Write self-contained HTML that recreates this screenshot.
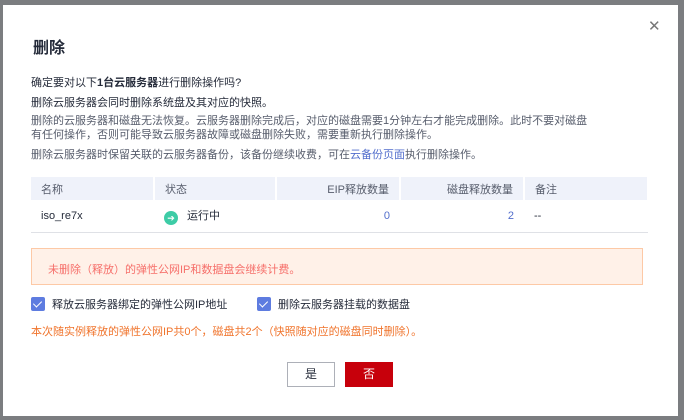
<!DOCTYPE html>
<html><head><meta charset="utf-8"><style>
*{margin:0;padding:0;box-sizing:border-box}
body{width:684px;height:420px;background:#7b7d80;font-family:"Liberation Sans","Noto Sans CJK SC",sans-serif;font-size:11px;color:#252b3a;position:relative;overflow:hidden}
.dlg{position:absolute;left:3px;top:5px;width:675px;height:411px;background:#fff}
.a{position:absolute;white-space:nowrap}
.t{left:30px;top:29px;font-size:16px;color:#252b3a;font-weight:600}
.x{left:645px;top:12px;font-size:15px;color:#777}
.l{left:28px;font-size:11px}
.g{color:#575d6c}
table{position:absolute;left:28px;top:172px;width:618px;border-collapse:collapse;font-size:11px}
th{background:#eff2fa;font-weight:normal;height:23px;text-align:left;padding:0 10px;color:#575d6c;border-right:2px solid #fff}
td{height:32px;padding:0 10px;border-bottom:1px solid #dfe1e6}
.r{text-align:right}
.n{color:#526ecc}
.w{left:28px;top:243px;width:612px;height:37px;background:#fff1e8;border:1px solid #fdc9a6;color:#f66f6a;padding:12px 0 0 16px;font-size:11px}
.cb{width:14px;height:14px;background:#5e7ce0;border-radius:2px;display:inline-block;vertical-align:-3px;margin-right:7px;position:relative}
.cb:after{content:"";position:absolute;left:4px;top:2px;width:4px;height:7px;border:solid #fff;border-width:0 1px 1px 0;transform:rotate(45deg)}
.o{left:28px;top:318px;color:#f0742c}
.b{top:357px;width:48px;height:25px;text-align:center;line-height:23px;font-size:12px}
</style></head><body>
<div class="dlg">
<div class="a t">删除</div>
<div class="a x">✕</div>
<div class="a l" style="top:69px">确定要对以下<b style="font-weight:600">1台云服务器</b>进行删除操作吗?</div>
<div class="a l" style="top:89px">删除云服务器会同时删除系统盘及其对应的快照。</div>
<div class="a l g" style="top:107px">删除的云服务器和磁盘无法恢复。云服务器删除完成后，对应的磁盘需要1分钟左右才能完成删除。此时不要对磁盘</div>
<div class="a l g" style="top:121px">有任何操作，否则可能导致云服务器故障或磁盘删除失败，需要重新执行删除操作。</div>
<div class="a l g" style="top:141px">删除云服务器时保留关联的云服务器备份，该备份继续收费，可在<span class="n">云备份页面</span>执行删除操作。</div>
<table>
<tr><th style="width:123px">名称</th><th style="width:122px">状态</th><th class="r" style="width:124px">EIP释放数量</th><th class="r" style="width:124px">磁盘释放数量</th><th>备注</th></tr>
<tr><td>iso_re7x</td><td><span style="display:inline-block;width:14px;height:14px;border-radius:50%;background:#3dcca6;color:#fff;font-size:9px;text-align:center;line-height:14px;vertical-align:-2px;margin-right:9px">➔</span>运行中</td><td class="r n">0</td><td class="r n">2</td><td>--</td></tr>
</table>
<div class="a w">未删除（释放）的弹性公网IP和数据盘会继续计费。</div>
<div class="a" style="left:28px;top:291px"><span class="cb"></span>释放云服务器绑定的弹性公网IP地址</div>
<div class="a" style="left:254px;top:291px"><span class="cb"></span>删除云服务器挂载的数据盘</div>
<div class="a o">本次随实例释放的弹性公网IP共0个，磁盘共2个（快照随对应的磁盘同时删除）。</div>
<div class="a b" style="left:284px;border:1px solid #adb0b8;color:#252b3a">是</div>
<div class="a b" style="left:342px;background:#c7000b;color:#fff;line-height:25px">否</div>
</div>
</body></html>
